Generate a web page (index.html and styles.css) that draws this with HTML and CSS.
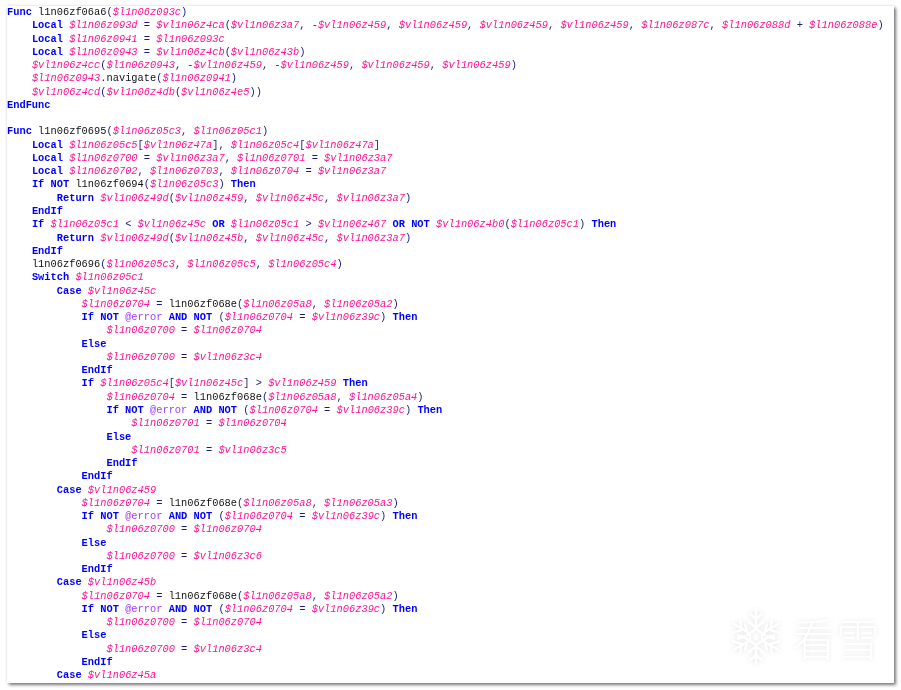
FILE: index.html
```html
<!DOCTYPE html>
<html lang="en">
<head>
<meta charset="utf-8">
<title>AutoIt script</title>
<link rel="stylesheet" href="styles.css">
</head>
<body>
<main class="panel">
<pre class="code"><span class="k">Func</span> <span class="f">l1n06zf06a6</span><span class="o">(</span><span class="v">$l1n06z093c</span><span class="o">)</span>
    <span class="k">Local</span> <span class="v">$l1n06z093d</span> <span class="o">=</span> <span class="v">$vl1n06z4ca</span><span class="o">(</span><span class="v">$vl1n06z3a7</span><span class="o">,</span> <span class="o">-</span><span class="v">$vl1n06z459</span><span class="o">,</span> <span class="v">$vl1n06z459</span><span class="o">,</span> <span class="v">$vl1n06z459</span><span class="o">,</span> <span class="v">$vl1n06z459</span><span class="o">,</span> <span class="v">$l1n06z087c</span><span class="o">,</span> <span class="v">$l1n06z088d</span> <span class="o">+</span> <span class="v">$l1n06z088e</span><span class="o">)</span>
    <span class="k">Local</span> <span class="v">$l1n06z0941</span> <span class="o">=</span> <span class="v">$l1n06z093c</span>
    <span class="k">Local</span> <span class="v">$l1n06z0943</span> <span class="o">=</span> <span class="v">$vl1n06z4cb</span><span class="o">(</span><span class="v">$vl1n06z43b</span><span class="o">)</span>
    <span class="v">$vl1n06z4cc</span><span class="o">(</span><span class="v">$l1n06z0943</span><span class="o">,</span> <span class="o">-</span><span class="v">$vl1n06z459</span><span class="o">,</span> <span class="o">-</span><span class="v">$vl1n06z459</span><span class="o">,</span> <span class="v">$vl1n06z459</span><span class="o">,</span> <span class="v">$vl1n06z459</span><span class="o">)</span>
    <span class="v">$l1n06z0943</span><span class="o">.</span><span class="f">navigate</span><span class="o">(</span><span class="v">$l1n06z0941</span><span class="o">)</span>
    <span class="v">$vl1n06z4cd</span><span class="o">(</span><span class="v">$vl1n06z4db</span><span class="o">(</span><span class="v">$vl1n06z4e5</span><span class="o">))</span>
<span class="k">EndFunc</span>

<span class="k">Func</span> <span class="f">l1n06zf0695</span><span class="o">(</span><span class="v">$l1n06z05c3</span><span class="o">,</span> <span class="v">$l1n06z05c1</span><span class="o">)</span>
    <span class="k">Local</span> <span class="v">$l1n06z05c5</span><span class="o">[</span><span class="v">$vl1n06z47a</span><span class="o">],</span> <span class="v">$l1n06z05c4</span><span class="o">[</span><span class="v">$vl1n06z47a</span><span class="o">]</span>
    <span class="k">Local</span> <span class="v">$l1n06z0700</span> <span class="o">=</span> <span class="v">$vl1n06z3a7</span><span class="o">,</span> <span class="v">$l1n06z0701</span> <span class="o">=</span> <span class="v">$vl1n06z3a7</span>
    <span class="k">Local</span> <span class="v">$l1n06z0702</span><span class="o">,</span> <span class="v">$l1n06z0703</span><span class="o">,</span> <span class="v">$l1n06z0704</span> <span class="o">=</span> <span class="v">$vl1n06z3a7</span>
    <span class="k">If NOT</span> <span class="f">l1n06zf0694</span><span class="o">(</span><span class="v">$l1n06z05c3</span><span class="o">)</span> <span class="k">Then</span>
        <span class="k">Return</span> <span class="v">$vl1n06z49d</span><span class="o">(</span><span class="v">$vl1n06z459</span><span class="o">,</span> <span class="v">$vl1n06z45c</span><span class="o">,</span> <span class="v">$vl1n06z3a7</span><span class="o">)</span>
    <span class="k">EndIf</span>
    <span class="k">If</span> <span class="v">$l1n06z05c1</span> <span class="o">&lt;</span> <span class="v">$vl1n06z45c</span> <span class="k">OR</span> <span class="v">$l1n06z05c1</span> <span class="o">&gt;</span> <span class="v">$vl1n06z467</span> <span class="k">OR NOT</span> <span class="v">$vl1n06z4b0</span><span class="o">(</span><span class="v">$l1n06z05c1</span><span class="o">)</span> <span class="k">Then</span>
        <span class="k">Return</span> <span class="v">$vl1n06z49d</span><span class="o">(</span><span class="v">$vl1n06z45b</span><span class="o">,</span> <span class="v">$vl1n06z45c</span><span class="o">,</span> <span class="v">$vl1n06z3a7</span><span class="o">)</span>
    <span class="k">EndIf</span>
    <span class="f">l1n06zf0696</span><span class="o">(</span><span class="v">$l1n06z05c3</span><span class="o">,</span> <span class="v">$l1n06z05c5</span><span class="o">,</span> <span class="v">$l1n06z05c4</span><span class="o">)</span>
    <span class="k">Switch</span> <span class="v">$l1n06z05c1</span>
        <span class="k">Case</span> <span class="v">$vl1n06z45c</span>
            <span class="v">$l1n06z0704</span> <span class="o">=</span> <span class="f">l1n06zf068e</span><span class="o">(</span><span class="v">$l1n06z05a8</span><span class="o">,</span> <span class="v">$l1n06z05a2</span><span class="o">)</span>
            <span class="k">If NOT</span> <span class="e">@error</span> <span class="k">AND NOT</span> <span class="o">(</span><span class="v">$l1n06z0704</span> <span class="o">=</span> <span class="v">$vl1n06z39c</span><span class="o">)</span> <span class="k">Then</span>
                <span class="v">$l1n06z0700</span> <span class="o">=</span> <span class="v">$l1n06z0704</span>
            <span class="k">Else</span>
                <span class="v">$l1n06z0700</span> <span class="o">=</span> <span class="v">$vl1n06z3c4</span>
            <span class="k">EndIf</span>
            <span class="k">If</span> <span class="v">$l1n06z05c4</span><span class="o">[</span><span class="v">$vl1n06z45c</span><span class="o">]</span> <span class="o">&gt;</span> <span class="v">$vl1n06z459</span> <span class="k">Then</span>
                <span class="v">$l1n06z0704</span> <span class="o">=</span> <span class="f">l1n06zf068e</span><span class="o">(</span><span class="v">$l1n06z05a8</span><span class="o">,</span> <span class="v">$l1n06z05a4</span><span class="o">)</span>
                <span class="k">If NOT</span> <span class="e">@error</span> <span class="k">AND NOT</span> <span class="o">(</span><span class="v">$l1n06z0704</span> <span class="o">=</span> <span class="v">$vl1n06z39c</span><span class="o">)</span> <span class="k">Then</span>
                    <span class="v">$l1n06z0701</span> <span class="o">=</span> <span class="v">$l1n06z0704</span>
                <span class="k">Else</span>
                    <span class="v">$l1n06z0701</span> <span class="o">=</span> <span class="v">$vl1n06z3c5</span>
                <span class="k">EndIf</span>
            <span class="k">EndIf</span>
        <span class="k">Case</span> <span class="v">$vl1n06z459</span>
            <span class="v">$l1n06z0704</span> <span class="o">=</span> <span class="f">l1n06zf068e</span><span class="o">(</span><span class="v">$l1n06z05a8</span><span class="o">,</span> <span class="v">$l1n06z05a3</span><span class="o">)</span>
            <span class="k">If NOT</span> <span class="e">@error</span> <span class="k">AND NOT</span> <span class="o">(</span><span class="v">$l1n06z0704</span> <span class="o">=</span> <span class="v">$vl1n06z39c</span><span class="o">)</span> <span class="k">Then</span>
                <span class="v">$l1n06z0700</span> <span class="o">=</span> <span class="v">$l1n06z0704</span>
            <span class="k">Else</span>
                <span class="v">$l1n06z0700</span> <span class="o">=</span> <span class="v">$vl1n06z3c6</span>
            <span class="k">EndIf</span>
        <span class="k">Case</span> <span class="v">$vl1n06z45b</span>
            <span class="v">$l1n06z0704</span> <span class="o">=</span> <span class="f">l1n06zf068e</span><span class="o">(</span><span class="v">$l1n06z05a8</span><span class="o">,</span> <span class="v">$l1n06z05a2</span><span class="o">)</span>
            <span class="k">If NOT</span> <span class="e">@error</span> <span class="k">AND NOT</span> <span class="o">(</span><span class="v">$l1n06z0704</span> <span class="o">=</span> <span class="v">$vl1n06z39c</span><span class="o">)</span> <span class="k">Then</span>
                <span class="v">$l1n06z0700</span> <span class="o">=</span> <span class="v">$l1n06z0704</span>
            <span class="k">Else</span>
                <span class="v">$l1n06z0700</span> <span class="o">=</span> <span class="v">$vl1n06z3c4</span>
            <span class="k">EndIf</span>
        <span class="k">Case</span> <span class="v">$vl1n06z45a</span></pre>
<div class="mark">
<svg class="flake" viewBox="0 0 56 60" width="56" height="60" aria-hidden="true">
<g fill="none" stroke="#fff" stroke-width="2.4">
<path d="M28 22V2M21 6l7 6 7-6M20 14l8 7 8-7"/>
<path d="M28 38v20M21 54l7-6 7 6M20 46l8-7 8 7"/>
<path d="M21 26L4 16M4 26l10-3-2-10M9 32l11-4-3-11"/>
<path d="M35 34l17 10M52 34l-10 3 2 10M47 28l-11 4 3 11"/>
<path d="M21 34L4 44M4 34l10 3-2 10M9 28l11 4-3 11"/>
<path d="M35 26l17-10M52 26l-10-3 2-10M47 32l-11-4 3-11"/>
<path d="M28 22l6 4v8l-6 4-6-4v-8z"/>
</g>
</svg>
<span class="brand">看雪</span>
</div>
</main>
</body>
</html>
```
FILE: styles.css
```css
html, body {
  margin: 0;
  padding: 0;
  background: #fff;
}

body {
  width: 901px;
  height: 690px;
  overflow: hidden;
  padding: 6px 7px 7px 7px;
  box-sizing: border-box;
}

.panel {
  position: relative;
  height: 677px;
  background: #fff;
  overflow: hidden;
  box-shadow: 2px 2px 3px rgba(0, 0, 0, 0.5), 0 0 3px rgba(0, 0, 0, 0.12);
}

.code {
  margin: 0;
  font-family: "Liberation Mono", "Courier New", monospace;
  font-size: 10.37px;
  line-height: 13.26px;
  color: #111;
  filter: blur(0.4px);
}

.k {
  color: #0000ff;
  font-weight: 700;
}

.v {
  color: #ff1493;
  font-style: italic;
}

.o {
  color: #1a1a80;
}

.f {
  color: #111;
}

.e {
  color: #a040ff;
}

.mark {
  position: absolute;
  right: 14px;
  bottom: 16px;
  display: flex;
  align-items: center;
  gap: 8px;
  filter: drop-shadow(0 0 2px rgba(0, 0, 0, 0.1));
}

.brand {
  color: #fff;
  font-family: "Noto Sans CJK SC", sans-serif;
  font-size: 44px;
  font-weight: 300;
  line-height: 50px;
}
```
